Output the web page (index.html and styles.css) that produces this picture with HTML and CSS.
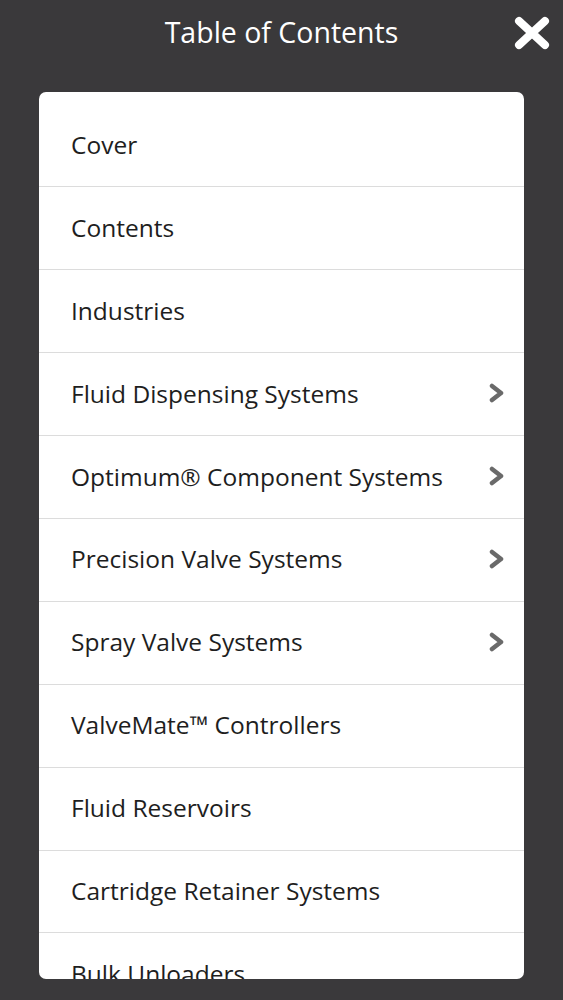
FILE: index.html
```html
<!DOCTYPE html>
<html>
<head>
<meta charset="utf-8">
<link rel="stylesheet" href="styles.css">
</head>
<body>
<div class="screen">
  <header class="topbar">
    <h1 class="title">Table of Contents</h1>
    <button class="close" aria-label="Close">
      <svg width="36" height="34" viewBox="0 0 36 34"><path d="M5 5 L31 29 M31 5 L5 29" stroke="#fff" stroke-width="8" stroke-linecap="round"/></svg>
    </button>
  </header>
  <div class="panel">
    <ul class="list">
      <li class="item"><span>Cover</span></li>
      <li class="item"><span>Contents</span></li>
      <li class="item"><span>Industries</span></li>
      <li class="item"><span>Fluid Dispensing Systems</span><svg class="chev" width="18" height="20" viewBox="0 0 18 20"><path d="M4 3 L13 10 L4 17" fill="none" stroke="#6a6a6a" stroke-width="4.5" stroke-linejoin="round" stroke-linecap="round"/></svg></li>
      <li class="item"><span>Optimum® Component Systems</span><svg class="chev" width="18" height="20" viewBox="0 0 18 20"><path d="M4 3 L13 10 L4 17" fill="none" stroke="#6a6a6a" stroke-width="4.5" stroke-linejoin="round" stroke-linecap="round"/></svg></li>
      <li class="item"><span>Precision Valve Systems</span><svg class="chev" width="18" height="20" viewBox="0 0 18 20"><path d="M4 3 L13 10 L4 17" fill="none" stroke="#6a6a6a" stroke-width="4.5" stroke-linejoin="round" stroke-linecap="round"/></svg></li>
      <li class="item"><span>Spray Valve Systems</span><svg class="chev" width="18" height="20" viewBox="0 0 18 20"><path d="M4 3 L13 10 L4 17" fill="none" stroke="#6a6a6a" stroke-width="4.5" stroke-linejoin="round" stroke-linecap="round"/></svg></li>
      <li class="item"><span>ValveMate™ Controllers</span></li>
      <li class="item"><span>Fluid Reservoirs</span></li>
      <li class="item"><span>Cartridge Retainer Systems</span></li>
      <li class="item"><span>Bulk Unloaders</span></li>
    </ul>
  </div>
</div>
</body>
</html>
```
FILE: styles.css
```css
html, body {
  margin: 0;
  padding: 0;
  background: #3a393b;
}
.screen {
  width: 563px;
  height: 1000px;
  background: #3a393b;
  font-family: "Open Sans", "Noto Sans", sans-serif;
  display: flex;
  flex-direction: column;
  overflow: hidden;
}
.topbar {
  height: 92px;
  flex: none;
  display: flex;
  align-items: flex-start;
  justify-content: center;
  position: relative;
}
.title {
  margin: 12px 0 0 0;
  font-weight: 400;
  font-size: 28.5px;
  line-height: 40px;
  color: #fff;
}
.close {
  position: absolute;
  right: 13px;
  top: 16px;
  background: none;
  border: 0;
  padding: 0;
  width: 36px;
  height: 34px;
}
.panel {
  margin: 0 39px 0 39px;
  height: 887px;
  background: #fff;
  border-radius: 7px;
  overflow: hidden;
  padding-top: 12.5px;
  box-sizing: border-box;
}
.list {
  list-style: none;
  margin: 0;
  padding: 0;
}
.item {
  box-sizing: border-box;
  height: 82.9px;
  border-bottom: 1px solid #dcdcdc;
  display: flex;
  align-items: center;
  justify-content: space-between;
  padding: 0 18px 2px 32px;
  font-size: 24.5px;
  color: #1e1e1e;
}
.chev {
  flex: none;
}
```
